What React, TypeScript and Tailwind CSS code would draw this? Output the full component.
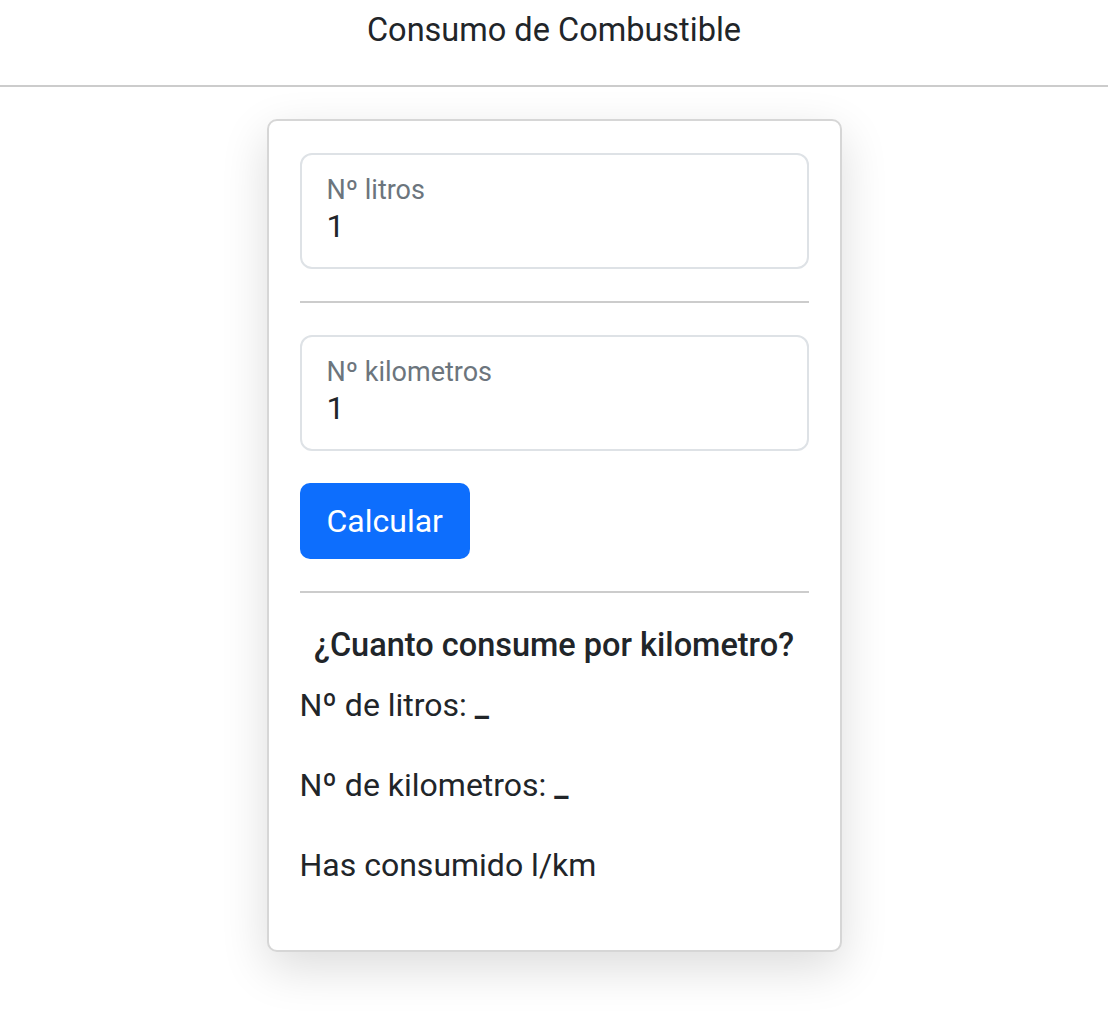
export default function App() {
  const font = "font-['Roboto','Liberation_Sans',sans-serif]";
  return (
    <div className={`min-h-[1015px] bg-white text-[#212529] ${font}`}>
      <header className="h-[87px] border-b-2 border-[#cccccc] flex justify-center pt-[6px]">
        <h1 className="text-[32.5px] leading-[48px] font-normal">Consumo de Combustible</h1>
      </header>

      <div className="flex justify-center pt-[32px]">
        <div className="w-[575px] border-2 border-[#d6d6d6] rounded-[10px] bg-white shadow-[0_16px_48px_rgba(0,0,0,0.14)] px-[31px] pt-[32px] pb-[29px]">
          <div className="h-[116px] border-2 border-[#dee2e6] rounded-[12px] px-[25px] pt-[19px]">
            <div className="text-[27px] leading-[32px] text-[#6c757d]">Nº litros</div>
            <div className="text-[32px] leading-[40px]">1</div>
          </div>

          <hr className="my-[32px] border-t-2 border-[#cccccc]" />

          <div className="h-[116px] border-2 border-[#dee2e6] rounded-[12px] px-[25px] pt-[19px]">
            <div className="text-[27px] leading-[32px] text-[#6c757d]">Nº kilometros</div>
            <div className="text-[32px] leading-[40px]">1</div>
          </div>

          <button className="mt-[32px] h-[76px] px-[27px] rounded-[10px] bg-[#0d6efd] text-white text-[32px] leading-[48px]">
            Calcular
          </button>

          <hr className="my-[32px] border-t-2 border-[#cccccc]" />

          <h5 className="text-center text-[32.5px] leading-[40px] font-medium mb-[16px]">
            ¿Cuanto consume por kilometro?
          </h5>
          <p className="text-[32px] leading-[48px] mb-[32px]">
            Nº de litros: <b>_</b>
          </p>
          <p className="text-[32px] leading-[48px] mb-[32px]">
            Nº de kilometros: <b>_</b>
          </p>
          <p className="text-[32px] leading-[48px] mb-[32px]">Has consumido l/km</p>
        </div>
      </div>
    </div>
  );
}
